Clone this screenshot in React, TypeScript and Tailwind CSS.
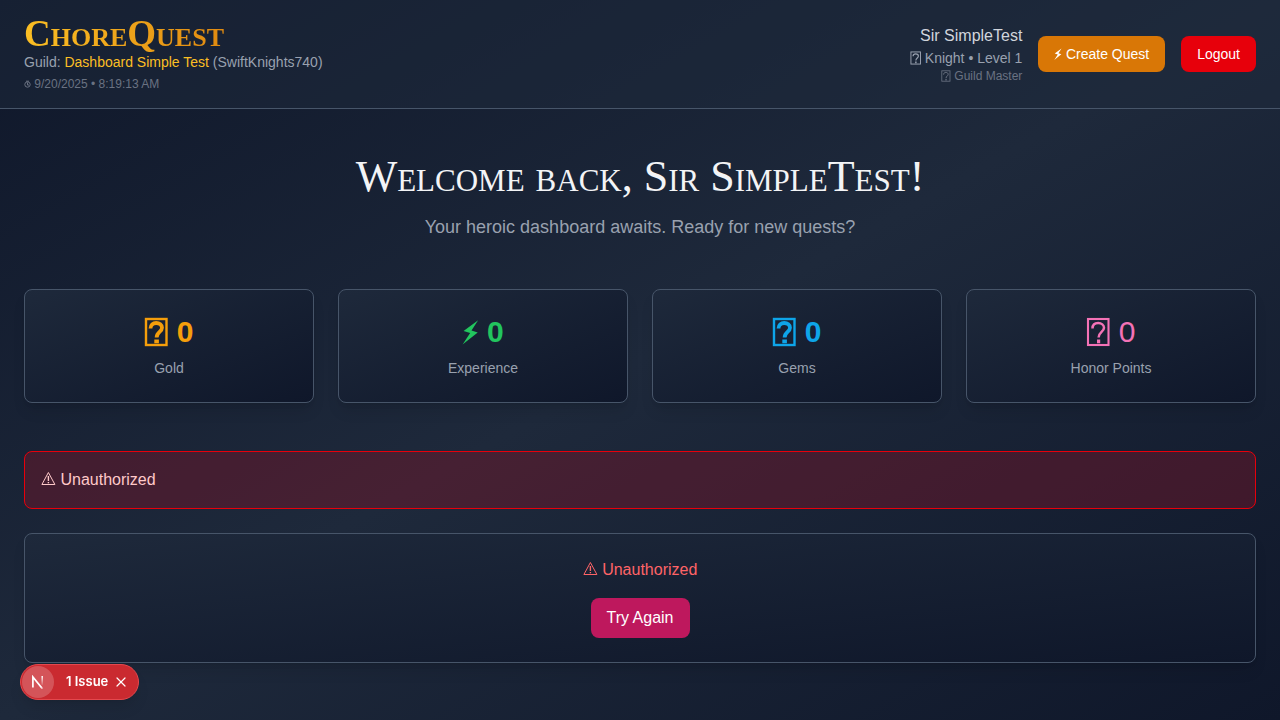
import { X } from "lucide-react";

const panel = "rounded-lg border border-[#475569] bg-linear-to-br from-[#1e293b] to-[#0f172a] shadow-lg";

function Unknown({ bold = false }: { bold?: boolean }) {
  return (
    <svg className="inline-block h-[1em] w-[0.8em] align-[-0.17em]" viewBox="0 0 24 30" fill="none" stroke="currentColor">
      <rect x="2" y="2" width="20.5" height="26" strokeWidth={bold ? 2.4 : 2.1} />
      <path
        d="M6.5 11.5C6.5 7.8 9 6 12.2 6S18 8 18 10.8C18 15 12.6 15 12.6 20.5"
        strokeWidth={bold ? 3.8 : 2.5}
      />
      <path d="M12.6 22.5V26.3" strokeWidth={bold ? 4.6 : 3.2} />
    </svg>
  );
}

function Bolt() {
  return (
    <svg className="inline-block h-[1em] w-[0.55em] align-[-0.17em]" viewBox="0 0 17 30" fill="currentColor">
      <path d="M16.6 3L1.6 14L8.4 16L0.6 28L16.2 15.6L9.8 13.4Z" />
    </svg>
  );
}

function Warning() {
  return (
    <svg
      className="inline-block h-4 w-[15px] align-[-2px]"
      viewBox="0 0 15 16"
      fill="none"
      stroke="currentColor"
    >
      <path d="M7.4 1.5L13.9 13.5H0.9Z" strokeWidth="1" />
      <path d="M7.4 5V10" strokeWidth="1.4" />
      <path d="M7.4 11V12.3" strokeWidth="1.4" />
    </svg>
  );
}

function Clock() {
  return (
    <svg className="inline-block h-2 w-[7px] align-[0px]" viewBox="0 0 7 8" fill="none" stroke="currentColor">
      <circle cx="3.5" cy="4.5" r="2.7" />
      <path d="M2 1.2H5M3.5 2.5V5H5" />
    </svg>
  );
}

const stats = [
  { icon: <Unknown bold />, value: 0, label: "Gold", tone: "font-bold text-[#f59e0b]" },
  { icon: <Bolt />, value: 0, label: "Experience", tone: "font-bold text-[#22c55e]" },
  { icon: <Unknown bold />, value: 0, label: "Gems", tone: "font-bold text-[#0ea5e9]" },
  { icon: <Unknown />, value: 0, label: "Honor Points", tone: "text-[#f472b6]" },
];

function Header() {
  return (
    <header className="flex items-center justify-between border-b border-[#475569] bg-[#1e293b]/50 px-6 py-4">
      <div>
        <div className="-mb-1 w-fit bg-linear-to-r from-[#fbbf24] to-[#e08a10] bg-clip-text pb-1 font-['Liberation_Serif',serif] text-[37px] leading-9 font-bold text-transparent [font-variant-caps:small-caps]">
          ChoreQuest
        </div>
        <p className="text-sm text-[#99a1af]">
          Guild: <span className="text-[#fbbf24]">Dashboard Simple Test</span> (SwiftKnights740)
        </p>
        <p className="mt-1 text-xs text-[#6a7282]">
          <Clock /> 9/20/2025 • 8:19:13 AM
        </p>
      </div>
      <div className="flex items-center gap-4">
        <div className="text-right">
          <p className="text-base text-[#d1d5dc]">Sir SimpleTest</p>
          <p className="text-sm text-[#99a1af]">
            <Unknown /> Knight • Level 1
          </p>
          <p className="text-xs text-[#6a7282]">
            <Unknown /> Guild Master
          </p>
        </div>
        <button className="rounded-lg bg-[#d97706] px-4 py-2 text-sm text-white">
          <Bolt /> Create Quest
        </button>
        <button className="rounded-lg bg-[#e7000b] px-4 py-2 text-sm text-white">Logout</button>
      </div>
    </header>
  );
}

function IssueBadge() {
  return (
    <div className="fixed bottom-5 left-5 flex h-9 items-center rounded-full border border-[#e5484d] bg-[#ca2a30] pr-[9px] pl-px font-['Inter',sans-serif] text-white shadow-lg">
      <button aria-label="Open tools" className="flex size-8 items-center justify-center rounded-full bg-white/20">
        <svg width="14" height="14" viewBox="0 0 14 14" fill="none">
          <defs>
            <linearGradient id="diag" x1="6" y1="6" x2="12.5" y2="14" gradientUnits="userSpaceOnUse">
              <stop stopColor="#fff" />
              <stop offset="0.7" stopColor="#fff" />
              <stop offset="1" stopColor="#fff" stopOpacity="0.3" />
            </linearGradient>
            <linearGradient id="stem" x1="12" y1="1" x2="12" y2="11" gradientUnits="userSpaceOnUse">
              <stop stopColor="#fff" />
              <stop offset="1" stopColor="#fff" stopOpacity="0" />
            </linearGradient>
          </defs>
          <path d="M1.9 12.5V2L11.5 13.8" stroke="url(#diag)" strokeWidth="1.7" />
          <path d="M11.2 1V10" stroke="url(#stem)" strokeWidth="1.5" />
        </svg>
      </button>
      <button className="ml-3 text-[13px] font-semibold">1 Issue</button>
      <button aria-label="Dismiss" className="ml-[5px]">
        <X size={16} strokeWidth={1.8} />
      </button>
    </div>
  );
}

export default function App() {
  return (
    <div className="min-h-screen bg-linear-to-br from-[#0f172a] via-[#1e293b] to-[#0f172a] font-['Liberation_Sans',sans-serif]">
      <Header />
      <main className="px-6 py-12">
        <div className="mb-12 text-center">
          <h1 className="mb-4 font-['Liberation_Serif',serif] text-[44px] leading-10 text-[#f3f4f6] [font-variant-caps:small-caps]">
            Welcome back, Sir SimpleTest!
          </h1>
          <p className="text-lg leading-7 text-[#99a1af]">Your heroic dashboard awaits. Ready for new quests?</p>
        </div>
        <div className="mb-12 grid grid-cols-4 gap-6">
          {stats.map((s) => (
            <div key={s.label} className={`${panel} p-6 text-center`}>
              <div className={`mb-2 text-3xl leading-9 ${s.tone}`}>
                {s.icon} {s.value}
              </div>
              <div className="text-sm text-[#99a1af]">{s.label}</div>
            </div>
          ))}
        </div>
        <div role="alert" className="mb-6 rounded-lg border border-[#e7000b] bg-[#821428]/40 p-4 text-[#ffc9c9]">
          <Warning /> Unauthorized
        </div>
        <div className={`${panel} p-6 text-center`}>
          <p className="mb-4 text-[#ff6467]">
            <Warning /> Unauthorized
          </p>
          <button className="rounded-lg bg-[#be185d] px-4 py-2 text-white">Try Again</button>
        </div>
      </main>
      <IssueBadge />
    </div>
  );
}
